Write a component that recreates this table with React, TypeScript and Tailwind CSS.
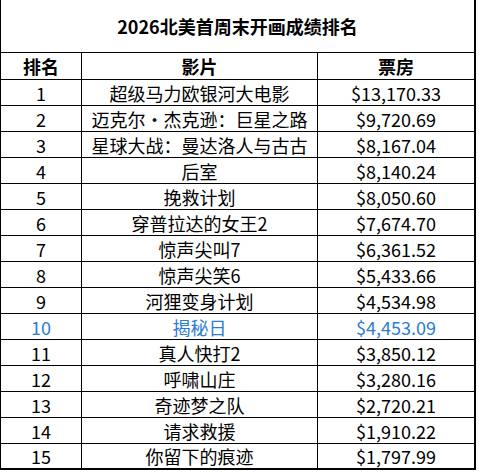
import React from "react";

const rows: [string, string, string][] = [
  ["1", "超级马力欧银河大电影", "$13,170.33"],
  ["2", "迈克尔·杰克逊：巨星之路", "$9,720.69"],
  ["3", "星球大战：曼达洛人与古古", "$8,167.04"],
  ["4", "后室", "$8,140.24"],
  ["5", "挽救计划", "$8,050.60"],
  ["6", "穿普拉达的女王2", "$7,674.70"],
  ["7", "惊声尖叫7", "$6,361.52"],
  ["8", "惊声尖笑6", "$5,433.66"],
  ["9", "河狸变身计划", "$4,534.98"],
  ["10", "揭秘日", "$4,453.09"],
  ["11", "真人快打2", "$3,850.12"],
  ["12", "呼啸山庄", "$3,280.16"],
  ["13", "奇迹梦之队", "$2,720.21"],
  ["14", "请求救援", "$1,910.22"],
  ["15", "你留下的痕迹", "$1,797.99"],
];

export default function App() {
  return (
    <div
      className="bg-white w-[479px] h-[472px] text-black"
      style={{ fontFamily: '"Noto Sans CJK SC", "Noto Sans", sans-serif' }}
    >
      <div className="w-[476px] border-l border-r-2 border-b-2 border-black">
        <div className="h-[53px] border-b border-black flex items-center justify-center text-[18px] font-bold leading-none">
          2026北美首周末开画成绩排名
        </div>
        <div className="flex h-[27px] border-b border-black text-[18px] font-bold leading-none">
          <div className="w-[81px] border-r border-black flex items-center justify-center">排名</div>
          <div className="w-[236px] border-r border-black flex items-center justify-center">影片</div>
          <div className="flex-1 flex items-center justify-center">票房</div>
        </div>
        {rows.map((r, i) => {
          const last = i === rows.length - 1;
          const blue = r[0] === "10";
          return (
            <div
              key={r[0]}
              className={
                "flex text-[18px] leading-none " +
                (last ? "h-[24px] " : "h-[26px] border-b border-black ") +
                (blue ? "text-[#2b7cd3]" : "text-black")
              }
            >
              <div className="w-[81px] border-r border-black flex items-center justify-center">{r[0]}</div>
              <div className="w-[236px] border-r border-black flex items-center justify-center whitespace-nowrap">{r[1]}</div>
              <div className="flex-1 flex items-center justify-center">{r[2]}</div>
            </div>
          );
        })}
      </div>
    </div>
  );
}
